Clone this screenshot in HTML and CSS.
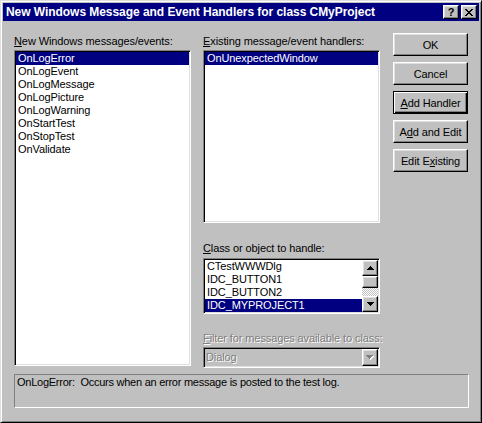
FILE: index.html
```html
<!DOCTYPE html>
<html>
<head>
<meta charset="utf-8">
<link rel="stylesheet" href="styles.css">
</head>
<body>
<div class="window">
  <div class="titlebar">
    <span class="title">New Windows Message and Event Handlers for class CMyProject</span>
    <div class="tbtns">
      <span class="tbtn raised help">?</span>
      <span class="tbtn raised close">
        <svg width="8" height="7" viewBox="0 0 8 7" shape-rendering="crispEdges">
          <path d="M0 0h2v1h-2zM6 0h2v1h-2zM1 1h2v1h-2zM5 1h2v1h-2zM2 2h4v1h-4zM3 3h2v1h-2zM2 4h4v1h-4zM1 5h2v1h-2zM5 5h2v1h-2zM0 6h2v1h-2zM6 6h2v1h-2z" fill="#000"/>
        </svg>
      </span>
    </div>
  </div>
  <div class="body">
    <div class="main">
      <div class="col col-left">
        <div class="label"><u>N</u>ew Windows messages/events:</div>
        <ul class="listbox list-new">
          <li class="selected">OnLogError</li>
          <li>OnLogEvent</li>
          <li>OnLogMessage</li>
          <li>OnLogPicture</li>
          <li>OnLogWarning</li>
          <li>OnStartTest</li>
          <li>OnStopTest</li>
          <li>OnValidate</li>
        </ul>
      </div>
      <div class="col col-mid">
        <div class="label"><u>E</u>xisting message/event handlers:</div>
        <ul class="listbox list-existing">
          <li class="selected">OnUnexpectedWindow</li>
        </ul>
        <div class="label label-class"><u>C</u>lass or object to handle:</div>
        <div class="listbox list-class">
          <ul class="items">
            <li>CTestWWWDlg</li>
            <li>IDC_BUTTON1</li>
            <li>IDC_BUTTON2</li>
            <li class="selected">IDC_MYPROJECT1</li>
          </ul>
          <div class="scrollbar">
            <div class="sb-btn raised">
              <svg width="7" height="4" viewBox="0 0 7 4" shape-rendering="crispEdges"><path d="M3 0h1v1h1v1h1v1h1v1h-7v-1h1v-1h1v-1h1z" fill="#000"/></svg>
            </div>
            <div class="sb-thumb raised"></div>
            <div class="sb-track"></div>
            <div class="sb-btn raised">
              <svg width="7" height="4" viewBox="0 0 7 4" shape-rendering="crispEdges"><path d="M0 0h7v1h-1v1h-1v1h-1v1h-1v-1h-1v-1h-1v-1h-1z" fill="#000"/></svg>
            </div>
          </div>
        </div>
        <div class="label label-filter disabled"><u>F</u>ilter for messages available to class:</div>
        <div class="combo">
          <span class="combo-text disabled">Dialog</span>
          <span class="combo-btn raised">
            <svg width="8" height="5" viewBox="0 0 8 5" shape-rendering="crispEdges">
              <path d="M1 1h7v1h-1v1h-1v1h-1v1h-1v-1h-1v-1h-1v-1h-1z" fill="#fff"/>
              <path d="M0 0h7v1h-1v1h-1v1h-1v1h-1v-1h-1v-1h-1v-1h-1z" fill="#808080"/>
            </svg>
          </span>
        </div>
      </div>
      <div class="col col-buttons">
        <div class="btn raised">OK</div>
        <div class="btn raised">Cancel</div>
        <div class="btn default"><u>A</u>dd Handler</div>
        <div class="btn raised">A<u>d</u>d and Edit</div>
        <div class="btn raised">Edit E<u>x</u>isting</div>
      </div>
    </div>
    <div class="status">OnLogError:&nbsp; Occurs when an error message is posted to the test log.</div>
  </div>
</div>
</body>
</html>
```

FILE: styles.css
```css
html, body {
  margin: 0;
  padding: 0;
  background: #c0c0c0;
}
body {
  font-family: "Liberation Sans", Arial, sans-serif;
  font-size: 11px;
  letter-spacing: -0.1px;
  color: #000;
}
.window {
  width: 482px;
  height: 423px;
  box-sizing: border-box;
  background: #c0c0c0;
  border: 1px solid;
  border-color: #dfdfdf #000 #000 #dfdfdf;
  box-shadow: inset 1px 1px #fff, inset -1px -1px #808080;
  padding: 2px;
  display: flex;
  flex-direction: column;
}
.raised {
  box-sizing: border-box;
  background: #c0c0c0;
  border: 1px solid;
  border-color: #fff #000 #000 #fff;
  box-shadow: inset -1px -1px #808080, inset 1px 1px #dfdfdf;
}
.titlebar {
  height: 18px;
  flex: none;
  background: #000080;
  display: flex;
  align-items: center;
  justify-content: space-between;
  padding: 0 2px 0 3px;
  color: #fff;
}
.title {
  font-weight: bold;
  font-size: 12px;
  letter-spacing: -0.05px;
  white-space: nowrap;
}
.tbtns {
  display: flex;
  gap: 2px;
}
.tbtn {
  width: 16px;
  height: 14px;
  display: flex;
  align-items: center;
  justify-content: center;
  color: #000;
}
.help {
  font-weight: bold;
  font-size: 11px;
  line-height: 12px;
}
.body {
  padding: 12px 0 0 11px;
}
.main {
  display: flex;
  gap: 12px;
}
.col {
  display: flex;
  flex-direction: column;
}
.col-left, .col-mid {
  width: 177px;
}
.label {
  height: 13px;
  line-height: 13px;
  margin: 2px 0 2px;
  white-space: nowrap;
}
.disabled {
  color: #808080;
  text-shadow: 1px 1px 0 #fff;
}
.listbox {
  box-sizing: border-box;
  margin: 0;
  padding: 1px;
  list-style: none;
  background: #fff;
  border: 1px solid;
  border-color: #808080 #fff #fff #808080;
  box-shadow: inset 1px 1px #000, inset -1px -1px #dfdfdf;
}
.listbox li {
  line-height: 13px;
  height: 13px;
  padding-left: 2px;
  white-space: nowrap;
}
.listbox li.selected {
  background: #000080;
  color: #fff;
}
.list-new {
  height: 316px;
}
.list-existing {
  height: 173px;
}
.label-class {
  margin: 19px 0 3px;
}
.list-class {
  height: 56px;
  display: flex;
}
.list-class .items {
  flex: 1;
  margin: 0;
  padding: 0;
  list-style: none;
  overflow: hidden;
}
.scrollbar {
  width: 16px;
  display: flex;
  flex-direction: column;
}
.sb-btn {
  height: 16px;
  display: flex;
  align-items: center;
  justify-content: center;
}
.sb-thumb {
  height: 12px;
}
.sb-track {
  flex: 1;
  background-color: #c0c0c0;
  background-image: conic-gradient(#fff 25%, #c0c0c0 0 50%, #fff 0 75%, #c0c0c0 0);
  background-size: 2px 2px;
}
.label-filter {
  margin: 18px 0 2px;
}
.combo {
  box-sizing: border-box;
  height: 21px;
  display: flex;
  padding: 1px;
  background: #c0c0c0;
  border: 1px solid;
  border-color: #808080 #fff #fff #808080;
  box-shadow: inset 1px 1px #000, inset -1px -1px #dfdfdf;
}
.combo-text {
  flex: 1;
  line-height: 17px;
  padding-left: 1px;
}
.combo-btn {
  width: 16px;
  height: 17px;
  display: flex;
  align-items: center;
  justify-content: center;
}
.col-buttons {
  width: 75px;
  margin-left: 1px;
  gap: 6px;
}
.btn {
  height: 23px;
  display: flex;
  align-items: center;
  justify-content: center;
  white-space: nowrap;
}
.btn.default {
  box-sizing: border-box;
  background: #c0c0c0;
  border: 1px solid #000;
  box-shadow: inset 1px 1px #fff, inset -1px -1px #000, inset -2px -2px #808080;
}
.status {
  box-sizing: border-box;
  width: 455px;
  height: 34px;
  margin-top: 6px;
  padding: 1px 2px;
  line-height: 13px;
  letter-spacing: -0.25px;
  border: 1px solid;
  border-color: #808080 #fff #fff #808080;
  white-space: nowrap;
}
```
